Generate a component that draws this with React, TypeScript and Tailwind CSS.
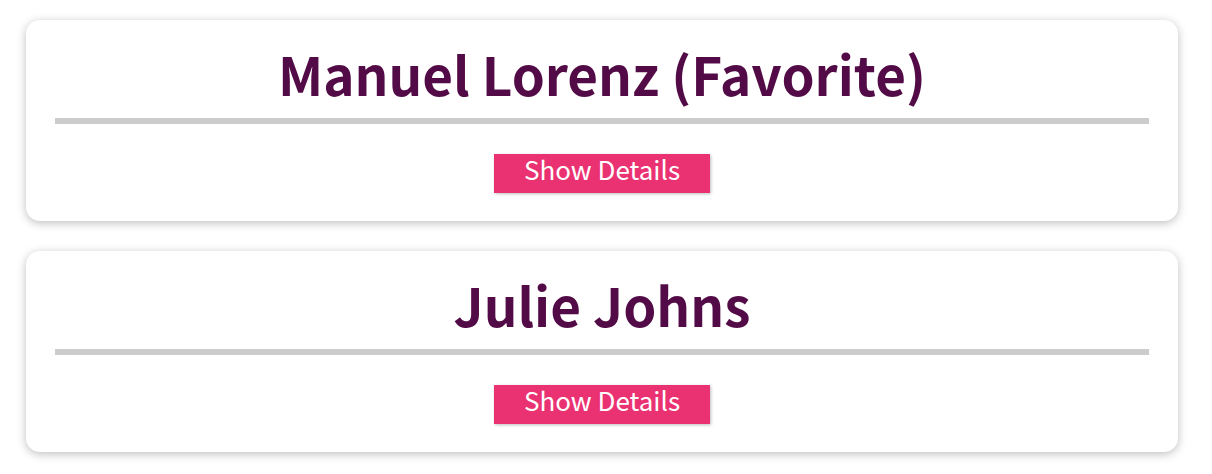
const people = [
  { id: 'm1', name: 'Manuel Lorenz (Favorite)' },
  { id: 'j2', name: 'Julie Johns' },
]

function FriendCard({ name }: { name: string }) {
  return (
    <li className="ml-[26px] w-[1152px] rounded-[14px] bg-white pt-[27px] pb-[28px] px-[29px] shadow-[0_2px_10px_rgba(0,0,0,0.26)]">
      <h2 className="text-center text-[53px] font-bold leading-none text-[#520b46]">{name}</h2>
      <div className="mt-[18px] h-[6px] bg-[#cccccc]" />
      <div className="mt-[30px] flex justify-center">
        <button className="h-[39px] w-[216px] bg-[#ea3272] pb-[10px] text-[26px] leading-none text-white shadow-[1px_1px_3px_rgba(0,0,0,0.26)]">
          Show Details
        </button>
      </div>
    </li>
  )
}

export default function App() {
  return (
    <div className="min-h-[474px] bg-white pt-[20px] font-['Noto_Sans_CJK_KR','Noto_Sans',sans-serif]">
      <ul className="flex flex-col gap-[30px]">
        {people.map(p => (
          <FriendCard key={p.id} name={p.name} />
        ))}
      </ul>
    </div>
  )
}
